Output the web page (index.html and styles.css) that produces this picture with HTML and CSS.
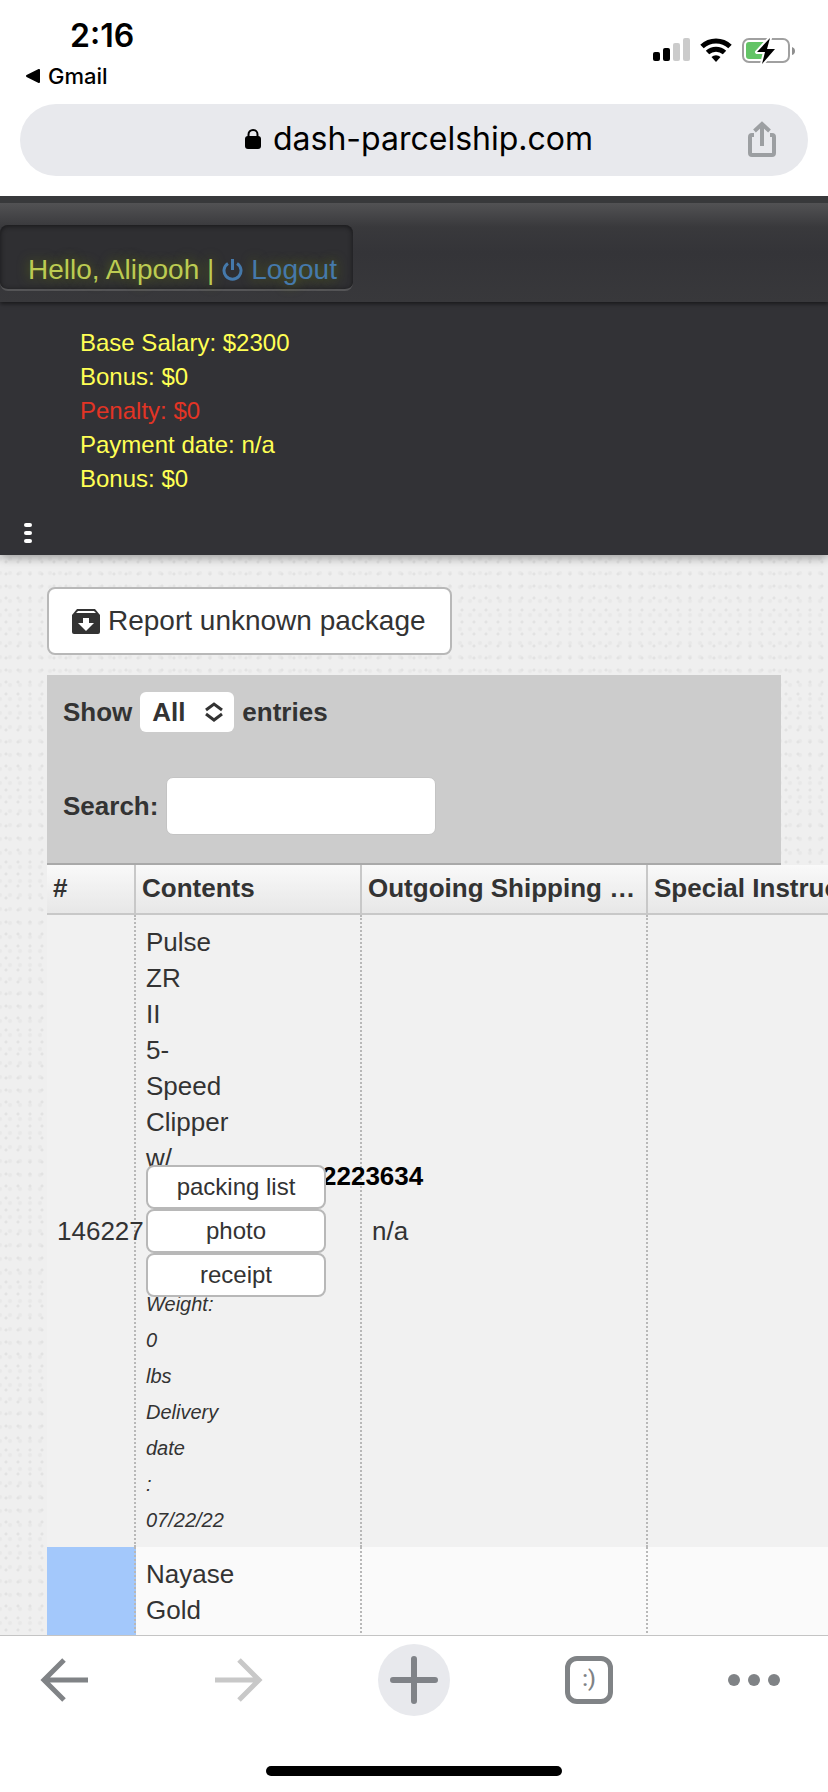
FILE: index.html
```html
<!doctype html>
<html lang="en">
  <head>
    <meta charset="UTF-8" />
    <meta name="viewport" content="width=device-width, initial-scale=1.0" />
    <title>dash-parcelship.com</title>
    <link rel="stylesheet" href="styles.css">
  </head>

  <body>
    <header class="browser-top">
      <div class="status">
        <div class="status-left">
          <time>2:16</time>
          <a href="#gmail" class="back-app">
            <svg width="14" height="14" viewBox="0 0 14 14">
              <path d="M13 1v12L1 7z" stroke="#000" stroke-width="2" stroke-linejoin="round" />
            </svg>
            Gmail
          </a>
        </div>
        <div class="status-icons">
          <svg width="37" height="24" viewBox="0 0 37 24">
            <rect x="0" y="14" width="7" height="9" rx="2" />
            <rect x="10" y="10" width="7" height="13" rx="2" />
            <rect x="20" y="5" width="7" height="18" rx="2" fill="#cbcbcb" />
            <rect x="30" y="0" width="7" height="23" rx="2" fill="#cbcbcb" />
          </svg>
          <svg width="32" height="24" viewBox="0 0 32 24">
            <g fill="none" stroke="#000" stroke-width="5">
              <path d="M2 8.500a20.500 20.500 0 0 1 28 0" />
              <path d="M7.500 14.500a12.500 12.500 0 0 1 17 0" />
            </g>
            <path d="M11.500 19a6.500 6.500 0 0 1 9 0L16 24z" />
          </svg>
          <svg width="54" height="26" viewBox="0 0 54 26">
            <rect x="1" y="1" width="46" height="23" rx="6" fill="none" stroke="#a0a0a0" stroke-width="2" />
            <rect x="4" y="4" width="20" height="17" rx="3" fill="#63c466" />
            <path d="M50 9q3 1 3 4t-3 4z" fill="#8e8e8e" />
            <path d="M28 0L15 14h8l-3 12 13-15h-8l3-11z" stroke="#fff" stroke-width="4" stroke-linejoin="round" />
            <path d="M28 0L15 14h8l-3 12 13-15h-8l3-11z" />
          </svg>
        </div>
      </div>
      <div class="address">
        <a href="#site" class="address-text">
          <svg width="16" height="20" viewBox="0 0 16 20">
            <rect x="0" y="7" width="16" height="13" rx="3" />
            <path d="M3.500 9V5.500a4.500 4.500 0 0 1 9 0V9" fill="none" stroke="#000" stroke-width="2" />
          </svg>
          dash-parcelship.com
        </a>
        <button class="share" aria-label="Share">
          <svg width="28" height="36" viewBox="0 0 28 36" fill="none" stroke="#9c9fa2" stroke-width="4">
            <path d="M6 14H4q-2 0-2 2v16q0 2 2 2h20q2 0 2-2V16q0-2-2-2h-2" />
            <path d="M14 25V3M6.500 10L14 3l7.500 7" />
          </svg>
        </button>
      </div>
    </header>

    <main class="site">
      <div class="site-header">
        <nav class="navbar">
          <div class="greeting">
            Hello, Alipooh |
            <a href="#logout">
              <svg width="21" height="22" viewBox="0 0 21 22" fill="none" stroke="#4579ab" stroke-width="3">
                <path d="M6 4.500a8.500 8.500 0 1 0 9 0M10.500 0v11" />
              </svg>
              Logout</a>
          </div>
        </nav>
        <ul class="salary">
          <li>Base Salary: $2300</li>
          <li>Bonus: $0</li>
          <li class="penalty">Penalty: $0</li>
          <li>Payment date: n/a</li>
          <li>Bonus: $0</li>
        </ul>
        <button class="menu" aria-label="Menu"><span></span><span></span><span></span></button>
      </div>

      <div class="content">
        <button class="btn report">
          <svg width="28" height="25" viewBox="0 0 28 25">
            <path d="M5 0h18l5 6v17q0 2-2 2H2q-2 0-2-2V6z" fill="#333" />
            <path d="M4 4l2-2h16l2 2z" fill="#fff" />
            <path d="M11 9h6v5h5l-8 8-8-8h5z" fill="#fff" />
          </svg>
          Report unknown package
        </button>

        <div class="toolbar">
          <label class="show">
            Show
            <span class="select-wrapper">
              <select>
                <option>All</option>
                <option>10</option>
                <option>25</option>
              </select>
              <svg width="18" height="20" viewBox="0 0 18 20" fill="none" stroke="#333" stroke-width="3">
                <path d="M1 8l8-6 8 6M1 12l8 6 8-6" />
              </svg>
            </span>
            entries
          </label>
          <label class="search">
            Search:
            <input type="search" />
          </label>
        </div>

        <table>
          <thead>
            <tr>
              <th class="col-id">#</th>
              <th class="col-contents">Contents</th>
              <th class="col-label">Outgoing Shipping …</th>
              <th class="col-notes">Special Instructions</th>
            </tr>
          </thead>
          <tbody>
            <tr>
              <td>146227</td>
              <td class="contents">
                Pulse<br />ZR<br />II<br />5-<br />Speed<br />Clipper<br />w/
                <div class="files">
                  <strong>2223634</strong>
                  <button class="btn">packing list</button>
                  <button class="btn">photo</button>
                  <button class="btn">receipt</button>
                </div>
                <em>Weight:<br />0<br />lbs<br />Delivery<br />date<br />:<br />07/22/22</em>
              </td>
              <td>n/a</td>
              <td></td>
            </tr>
            <tr>
              <td class="marked"></td>
              <td>Nayase<br />Gold<br /><br /></td>
              <td></td>
              <td></td>
            </tr>
          </tbody>
        </table>
      </div>
    </main>

    <footer class="browser-bottom">
      <div class="tools">
        <button aria-label="Back">
          <svg width="48" height="44" viewBox="0 0 48 44" fill="none" stroke="#808386" stroke-width="5">
            <path d="M48 22H4M24 2L4 22l20 20" />
          </svg>
        </button>
        <button aria-label="Forward">
          <svg width="48" height="44" viewBox="0 0 48 44" fill="none" stroke="#c8c8c8" stroke-width="5">
            <path d="M0 22h44M24 2l20 20-20 20" />
          </svg>
        </button>
        <button class="new-tab" aria-label="New tab">
          <svg width="48" height="48" viewBox="0 0 48 48" stroke="#808388" stroke-width="6" stroke-linecap="round">
            <path d="M24 3v42M3 24h42" />
          </svg>
        </button>
        <button aria-label="Tabs"><span class="tabs">:)</span></button>
        <button class="more" aria-label="More">
          <svg width="52" height="12" viewBox="0 0 52 12" fill="#808386">
            <circle cx="6" cy="6" r="6" />
            <circle cx="26" cy="6" r="6" />
            <circle cx="46" cy="6" r="6" />
          </svg>
        </button>
      </div>
      <div class="home-bar"></div>
    </footer>
  </body>
</html>
```
FILE: styles.css
```css
* {
  box-sizing: border-box;
}

body {
  margin: 0;
  height: 100vh;
  display: flex;
  flex-direction: column;
  overflow: hidden;
  background: #fff;
  color: #333;
  font-family: "Liberation Sans", Arial, sans-serif;
  font-size: 26px;
  line-height: 36px;
}

svg {
  display: block;
  flex: none;
}

button {
  border: 0;
  padding: 0;
  background: none;
  font: inherit;
  color: inherit;
}

a {
  color: inherit;
  text-decoration: none;
}

/* browser chrome */
.browser-top {
  flex: none;
  padding: 16px 20px 20px;
  font-family: Inter, sans-serif;
  color: #000;
}

.status {
  display: flex;
  justify-content: space-between;
  height: 88px;
  padding: 0 12px 0 6px;
}

.status time {
  display: block;
  padding-left: 44px;
  font-size: 32px;
  font-weight: 600;
  line-height: 40px;
}

.back-app {
  display: flex;
  align-items: center;
  gap: 8px;
  font-size: 22px;
  font-weight: 500;
  line-height: 40px;
}

.status-icons {
  display: flex;
  align-items: flex-start;
  gap: 10px;
  padding-top: 22px;
}

.address {
  display: grid;
  grid-template-columns: 1fr auto 1fr;
  align-items: center;
  height: 72px;
  padding: 0 32px 2px 42px;
  border-radius: 36px;
  background: #e8e9ed;
}

.address-text {
  grid-column: 2;
  display: flex;
  align-items: center;
  gap: 12px;
  font-size: 32px;
}

.share {
  justify-self: end;
}

/* site */
.site {
  flex: 1;
  min-height: 0;
  overflow: hidden;
  background-color: #efefef;
  background-image:
    radial-gradient(circle, #e2e2e2 1px, transparent 2px),
    radial-gradient(circle, #e8e8e8 1px, transparent 3px);
  background-size: 12px 12px, 10px 14px;
  background-position: 0 0, 5px 6px;
}

.site-header {
  background: #323236;
  box-shadow: 0 2px 10px rgba(0, 0, 0, 0.4);
}

.navbar {
  border-top: 7px solid #38393b;
  padding: 22px 0 11px;
  background: linear-gradient(#525254, #39393c 24px, #343438 50px, #38383b);
  box-shadow: 0 2px 4px rgba(0, 0, 0, 0.5);
}

.greeting {
  display: flex;
  width: fit-content;
  padding: 29px 16px 3px 28px;
  gap: 8px;
  border-bottom: 2px solid #555557;
  border-radius: 8px;
  background: #2f2f32;
  box-shadow: inset 0 1px 5px #161618;
  color: #bccb52;
  font-size: 28px;
  line-height: 32px;
  text-shadow: 0 0 12px #5c6b12;
}

.greeting a {
  display: flex;
  align-items: center;
  gap: 8px;
  color: #4579ab;
}

.salary {
  list-style: none;
  margin: 0;
  padding: 24px 80px 27px;
  color: #ffff54;
  font-size: 24px;
  line-height: 34px;
}

.penalty {
  color: #e23425;
}

.menu {
  display: flex;
  flex-direction: column;
  gap: 4px;
  padding: 0 24px 12px;
}

.menu span {
  width: 8px;
  height: 4px;
  border-radius: 2px;
  background: #fff;
}

.content {
  padding: 32px 47px 0;
}

.btn {
  display: block;
  border: 2px solid #b8b8b8;
  border-radius: 8px;
  background: #fff;
}

.report {
  display: flex;
  align-items: center;
  gap: 8px;
  height: 68px;
  margin-bottom: 20px;
  padding: 0 24px 0 23px;
  font-size: 28px;
}

.toolbar {
  padding: 17px 16px 28px;
  border-bottom: 2px solid #a9a9a9;
  background: #ccc;
  font-weight: bold;
}

.toolbar label {
  display: flex;
  align-items: center;
  gap: 8px;
}

.show {
  margin-bottom: 45px;
}

.select-wrapper {
  position: relative;
}

.select-wrapper select {
  display: block;
  appearance: none;
  width: 94px;
  height: 40px;
  padding: 0 12px;
  border: 0;
  border-radius: 6px;
  background: #fff;
  color: #333;
  font: inherit;
}

.select-wrapper svg {
  position: absolute;
  top: 10px;
  right: 11px;
  pointer-events: none;
}

.search input {
  appearance: none;
  width: 270px;
  height: 58px;
  padding: 0 12px;
  border: 1px solid #c4c4c4;
  border-radius: 7px;
  background: #fff;
  font: inherit;
}

table {
  table-layout: fixed;
  width: 960px;
  border-collapse: separate;
  border-spacing: 0;
}

th {
  height: 50px;
  padding: 0 6px 2px;
  border-right: 2px solid #c8c8c8;
  border-bottom: 2px solid #c8c8c8;
  background: linear-gradient(#f9f9f9, #e7e7e7);
  text-align: left;
  white-space: nowrap;
}

.col-id {
  width: 89px;
}

.col-contents {
  width: 226px;
}

.col-label {
  width: 286px;
}

td {
  padding: 9px 10px;
  border-right: 2px dotted #b8b8b8;
}

tbody tr {
  background: #f1f1f1;
}

tbody tr:nth-child(even) {
  background: #fafafa;
}

td.marked {
  background: #a3c8fb;
}

td em {
  display: block;
  font-size: 20px;
}

/* the file buttons spill over the lines around them */
.files {
  position: relative;
  height: 110px;
}

.files strong {
  position: absolute;
  top: -18px;
  left: 176px;
  color: #000;
}

.files .btn {
  position: relative;
  top: -11px;
  width: 180px;
  height: 44px;
  font-size: 24px;
  line-height: 36px;
}

/* bottom toolbar */
.browser-bottom {
  flex: none;
  border-top: 1px solid #c4c4c4;
  padding: 8px 28px 16px;
}

.tools {
  display: flex;
  justify-content: space-between;
  margin-bottom: 50px;
}

.tools button {
  display: flex;
  align-items: center;
  justify-content: center;
  width: 72px;
  height: 72px;
}

.tools .new-tab {
  border-radius: 50%;
  background: #e8e9ed;
}

.tools .more {
  justify-content: flex-start;
}

.tabs {
  width: 48px;
  height: 48px;
  border: 5px solid #808386;
  border-radius: 12px;
  color: #808386;
  font-family: Roboto, sans-serif;
  font-size: 22px;
  font-weight: 500;
}

.home-bar {
  width: 296px;
  height: 10px;
  margin: 0 auto;
  border-radius: 5px;
  background: #000;
}
```
